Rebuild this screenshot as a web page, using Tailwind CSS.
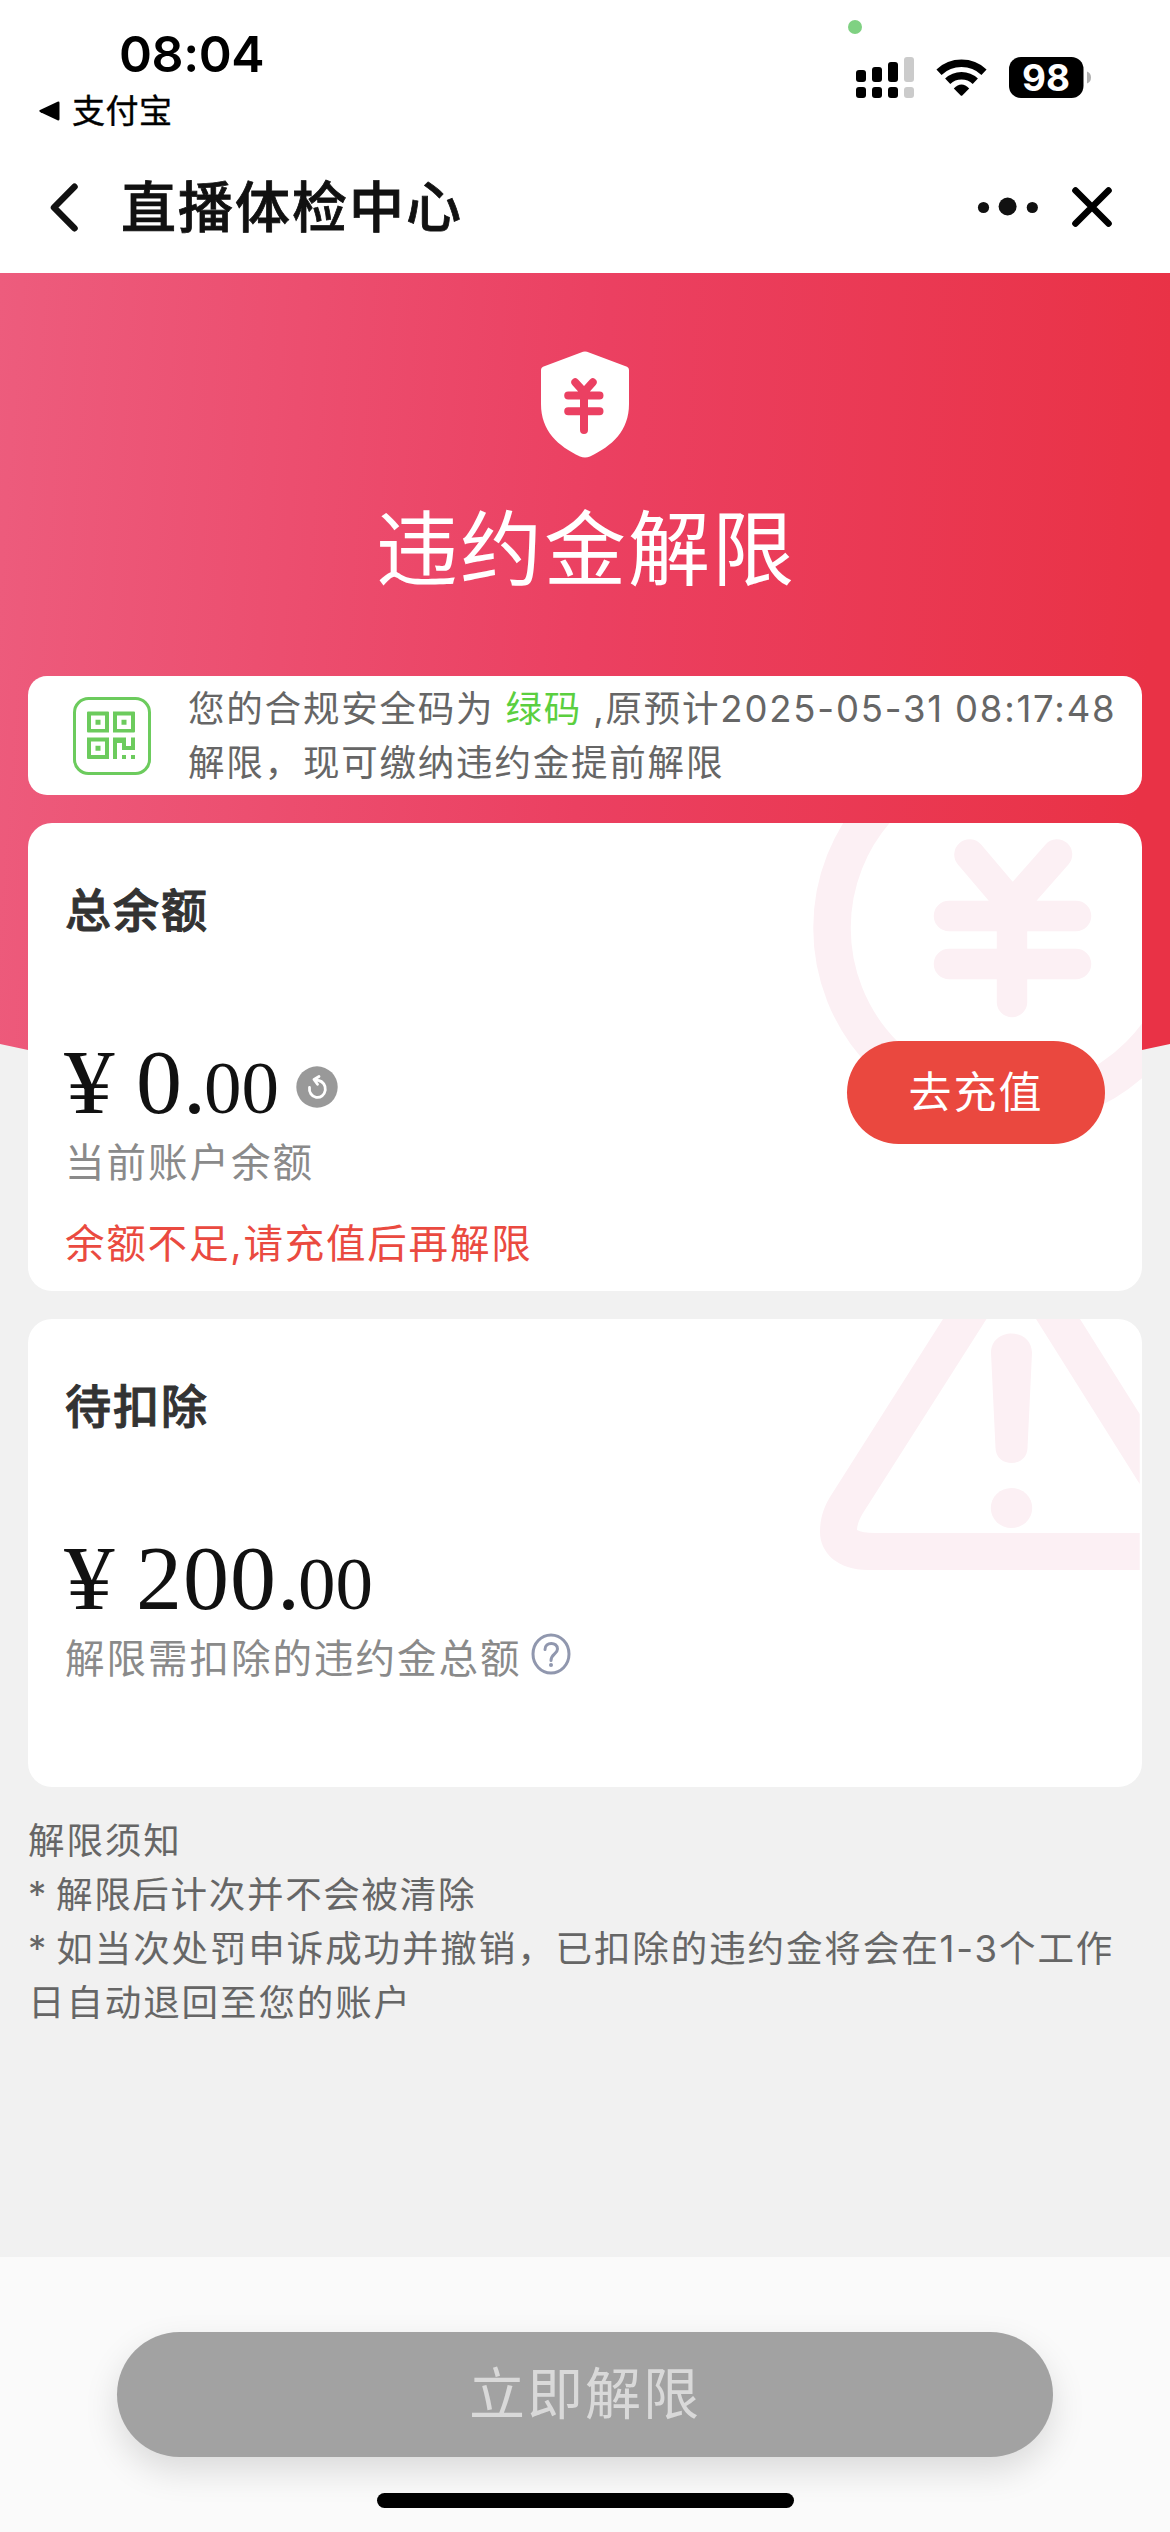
<!DOCTYPE html>
<html lang="zh-CN">
<head>
<meta charset="utf-8">
<meta name="viewport" content="width=device-width, initial-scale=1">
<title>直播体检中心</title>
<script src="https://cdn.jsdelivr.net/npm/@tailwindcss/browser@4"></script>
</head>
<body class="w-[1170px] h-[2532px] overflow-hidden bg-[#f1f1f1] font-['Inter','Noto_Sans_CJK_SC',sans-serif] flex flex-col">

<!-- Status bar -->
<header class="h-[273px] shrink-0 bg-white flex flex-col">
  <div class="h-[140px] flex justify-between pl-[37px] pr-[78px]">
    <div class="pt-[24px]">
      <div class="pl-[82px] h-[60px] leading-[60px] text-[50px] font-semibold text-black tracking-[-0.4px]">08:04</div>
      <div class="flex items-center h-[54px] gap-[11px]">
        <svg class="w-[24px] h-[22px]" viewBox="0 0 24 22"><path d="M3.500 9.800L20.500 1.800Q22.500 1 22.500 3V19Q22.500 21 20.500 20.200L3.500 12.200Q1 11 3.500 9.800Z" fill="#000"/></svg>
        <span class="text-[33px] leading-[54px] tracking-[0.5px] text-black [-webkit-text-stroke:0.4px_#000]">支付宝</span>
      </div>
    </div>
    <svg class="w-[244px] h-[140px]" viewBox="848 0 244 140">
      <circle cx="855" cy="27" r="7" fill="#7fd182"/>
      <g fill="#000">
        <rect x="856" y="70" width="10" height="12" rx="3"/><rect x="872" y="67" width="10" height="15" rx="3"/><rect x="888" y="62" width="10" height="20" rx="3"/>
        <rect x="856" y="87" width="10" height="11" rx="3"/><rect x="872" y="87" width="10" height="11" rx="3"/><rect x="888" y="87" width="10" height="11" rx="3"/>
      </g>
      <g fill="#cbcbcb"><rect x="904" y="57" width="10" height="25" rx="3"/><rect x="904" y="87" width="10" height="11" rx="3"/></g>
      <g fill="none" stroke="#000" stroke-width="7.500">
        <path d="M939 72.200A33 33 0 0 1 984 72.200"/>
        <path d="M947.700 81.200A20 20 0 0 1 975.300 81.200"/>
      </g>
      <path d="M953.800 88.500Q961.500 80.500 969.200 88.500L962.500 95.300Q961.500 96.300 960.500 95.300Z" fill="#000"/>
      <rect x="1009" y="57" width="74.500" height="41" rx="12" fill="#000"/>
      <path d="M1087 71.500Q1091 73 1091 77.500T1087 83.500Z" fill="#b0b0b0"/>
      <text x="1046" y="91" text-anchor="middle" font-family="Inter" font-weight="700" font-size="37" textLength="48" lengthAdjust="spacingAndGlyphs" fill="#fff">98</text>
    </svg>
  </div>
  <!-- Navigation -->
  <div class="h-[133px] flex items-center pl-[48px] pr-[56px]">
    <svg class="w-[34px] h-[50px]" viewBox="0 0 34 50"><path d="M26.500 4.800L6 25.500L26.500 46.200" fill="none" stroke="#111" stroke-width="6.500" stroke-linecap="round" stroke-linejoin="round"/></svg>
    <h1 class="ml-[39px] flex-1 text-[55px] leading-[80px] tracking-[2px] font-medium text-[#111] [-webkit-text-stroke:0.8px_#111]">直播体检中心</h1>
    <svg class="w-[140px] h-[50px]" viewBox="974 182 140 50">
      <g fill="#111"><circle cx="983.500" cy="207.500" r="5.600"/><circle cx="1007.600" cy="206.500" r="9"/><circle cx="1032.300" cy="207.500" r="5.600"/></g>
      <path d="M1075.500 190.500L1108.500 223.500M1108.500 190.500L1075.500 223.500" stroke="#000" stroke-width="6.600" stroke-linecap="round"/>
    </svg>
  </div>
</header>

<main class="relative flex-1 flex flex-col px-[28px]">
  <!-- Hero backdrop -->
  <div class="absolute inset-x-0 top-0 h-[800px] bg-[linear-gradient(94deg,#ed5c7d_0%,#eb4061_50%,#e93246_96%,#e93246_100%)] [clip-path:polygon(0_0,100%_0,100%_771px,97.6%_777px,80%_800px,20%_800px,2.4%_777px,0_771px)]"></div>

  <section class="relative h-[403px] flex flex-col items-center pt-[78px] text-white">
    <svg class="w-[90px] h-[107px]" viewBox="0 0 90 107">
      <path d="M43 .800Q45 0 47 .800L87 15.800Q89 16.800 89 19V53C89 80 72 95 50 105.500Q45 107.500 40 105.500C18 95 1 80 1 53V19Q1 16.800 3 15.800Z" fill="#fff"/>
      <path d="M35.300 31.300L44 41M52.700 31.300L44 41V79M28.200 44.600H59.500M28.200 60.300H59.500" fill="none" stroke="#eb4062" stroke-width="8" stroke-linecap="round"/>
    </svg>
    <h2 class="mt-[33px] text-[82px] leading-[118px] tracking-[2px] font-normal pl-[2px]">违约金解限</h2>
  </section>

  <!-- Safety code notice -->
  <section class="relative h-[119px] rounded-[19px] bg-white flex items-center pl-[45px]">
    <svg class="w-[78px] h-[78px] shrink-0" viewBox="0 0 78 78" fill="#6ccb5d">
      <rect x="1.500" y="1.500" width="75" height="75" rx="14" fill="none" stroke="#6ccb5d" stroke-width="3"/>
      <path fill-rule="evenodd" d="M15 14.500H35Q36 14.500 36 15.500V35.500H15Q14 35.500 14 34.500V15.500Q14 14.500 15 14.500ZM18 18.500V32H32V18.500ZM40 14.500H61Q62 14.500 62 15.500V34.500Q62 35.500 61 35.500H40ZM44 18.500V32H58V18.500ZM14 40.500H36V62H15Q14 62 14 61ZM18 44.500V58H32V44.500Z"/>
      <path d="M22.500 22.800h5v5h-5zM48.500 22.800h5v5h-5zM22.500 48.800h5v5h-5zM40 40.500H53V49H58V40.500H62V53H49V46H44V62H40zM49 58h4v4h-4zM58 58h4v4h-4z"/>
    </svg>
    <p class="ml-[37px] text-[36.500px] leading-[54px] tracking-[1.800px] [word-spacing:-1px] text-[#666] whitespace-nowrap">您的合规安全码为 <span class="text-[#5bcf3f]">绿码</span> ,原预计2025-05-31 08:17:48<br>解限，现可缴纳违约金提前解限</p>
  </section>

  <!-- Total balance -->
  <section class="relative mt-[28px] h-[468px] rounded-[24px] bg-white overflow-hidden pl-[37px]">
    <svg class="absolute right-0 top-0 w-[342px] h-[468px]" viewBox="800 823 342 468" fill="none" stroke="#fcf0f4">
      <circle cx="1012" cy="928" r="180" stroke-width="37.500"/>
      <path d="M969.500 854.500L1012.500 905M1057 854.500L1012.500 905M949 916H1076M949 964H1076M1012 905V1002" stroke-width="30.500" stroke-linecap="round"/>
    </svg>
    <h3 class="relative pt-[52px] text-[46px] leading-[70px] tracking-[2px] font-medium text-[#333] [-webkit-text-stroke:1px_#333]">总余额</h3>
    <div class="relative flex items-center mt-[84px] h-[106px]">
      <div class="h-[106px] font-['Liberation_Serif',serif] text-[#111] leading-[106px] whitespace-nowrap"><span class="inline-block origin-left scale-x-110 -ml-[1px] mr-[2px] text-[92px]">¥</span><span class="text-[92px] tracking-[1px]"> 0.</span><span class="-ml-[3px] text-[75px]">00</span></div>
      <svg class="ml-[17px] mt-[10px] w-[42px] h-[42px]" viewBox="0 0 42 42">
        <circle cx="21" cy="21" r="20.700" fill="#999"/>
        <path d="M13.500 21.500A8 8.500 0 1 0 22.500 14.500L18.500 13.500M23 10.500L18 13.500L21.500 18.300" fill="none" stroke="#fff" stroke-width="2.800" stroke-linecap="round" stroke-linejoin="round"/>
      </svg>
    </div>
    <p class="relative mt-[-2px] text-[39.500px] leading-[60px] tracking-[2px] text-[#8a8a8a]">当前账户余额</p>
    <p class="relative mt-[21px] text-[39.500px] leading-[60px] tracking-[1.800px] text-[#ea4a40]">余额不足,请充值后再解限</p>
    <button class="absolute right-[37px] top-[218px] w-[258px] h-[103px] rounded-full bg-[#ea483f] text-white text-[43px] tracking-[2px] leading-[103px]">去充值</button>
  </section>

  <!-- Pending deduction -->
  <section class="relative mt-[28px] h-[468px] rounded-[24px] bg-white overflow-hidden pl-[37px]">
    <svg class="absolute right-[2px] top-0 w-[340px] h-[468px]" viewBox="800 1319 340 468" fill="#fcf0f4">
      <path fill-rule="evenodd" d="M943 1319H1080L1139.700 1414V1570H868C838 1570 820 1553 820 1532C820 1518 824 1507 830 1497ZM986.500 1319L863 1513Q857 1523 857 1530Q862 1533 875 1533H1139.700V1484L1036 1319Z"/>
      <path d="M991 1353C991 1327 1032 1327 1032 1353L1027.500 1448C1027 1468 996 1468 995.500 1448Z"/>
      <ellipse cx="1011.500" cy="1508" rx="20.700" ry="20"/>
    </svg>
    <h3 class="relative pt-[52px] text-[46px] leading-[70px] tracking-[2px] font-medium text-[#333] [-webkit-text-stroke:1px_#333]">待扣除</h3>
    <div class="relative mt-[84px] h-[106px] font-['Liberation_Serif',serif] text-[#111] leading-[106px] whitespace-nowrap"><span class="inline-block origin-left scale-x-110 -ml-[1px] mr-[2px] text-[92px]">¥</span><span class="text-[92px] tracking-[1px]"> 200.</span><span class="-ml-[3px] text-[75px]">00</span></div>
    <div class="relative mt-[-2px] flex items-center">
      <p class="text-[39.500px] leading-[60px] tracking-[2px] text-[#8a8a8a]">解限需扣除的违约金总额</p>
      <svg class="ml-[9px] -mt-[10px] w-[40px] h-[42px]" viewBox="0 0 40 42" fill="none" stroke="#9097ae" stroke-width="3">
        <ellipse cx="20" cy="21" rx="18" ry="19"/>
        <path d="M14 16.500C14 8.500 26.500 8.500 26.500 16C26.500 21 20 21 20 27.500" stroke-linecap="round"/><circle cx="20" cy="32" r="2" fill="#9097ae" stroke="none"/>
      </svg>
    </div>
  </section>

  <!-- Notes -->
  <section class="relative mt-[27px] -mr-[10px] text-[36.500px] leading-[54px] tracking-[1.900px] [word-spacing:-4px] text-[#666] whitespace-nowrap">
    <p>解限须知</p>
    <p class="tracking-[1.700px]">* 解限后计次并不会被清除</p>
    <p>* 如当次处罚申诉成功并撤销，已扣除的违约金将会在1-3个工作<br>日自动退回至您的账户</p>
  </section>
</main>

<footer class="h-[275px] shrink-0 bg-[#fafafa] flex flex-col items-center pt-[75px]">
  <button class="w-[936px] h-[125px] rounded-full bg-[#a2a2a2] text-[#d9d9d9] text-[56px] leading-[125px] tracking-[2px] shadow-[0_14px_34px_rgba(0,0,0,0.13)]">立即解限</button>
  <div class="mt-[36px] w-[417px] h-[15px] rounded-full bg-black"></div>
</footer>
</body>
</html>
